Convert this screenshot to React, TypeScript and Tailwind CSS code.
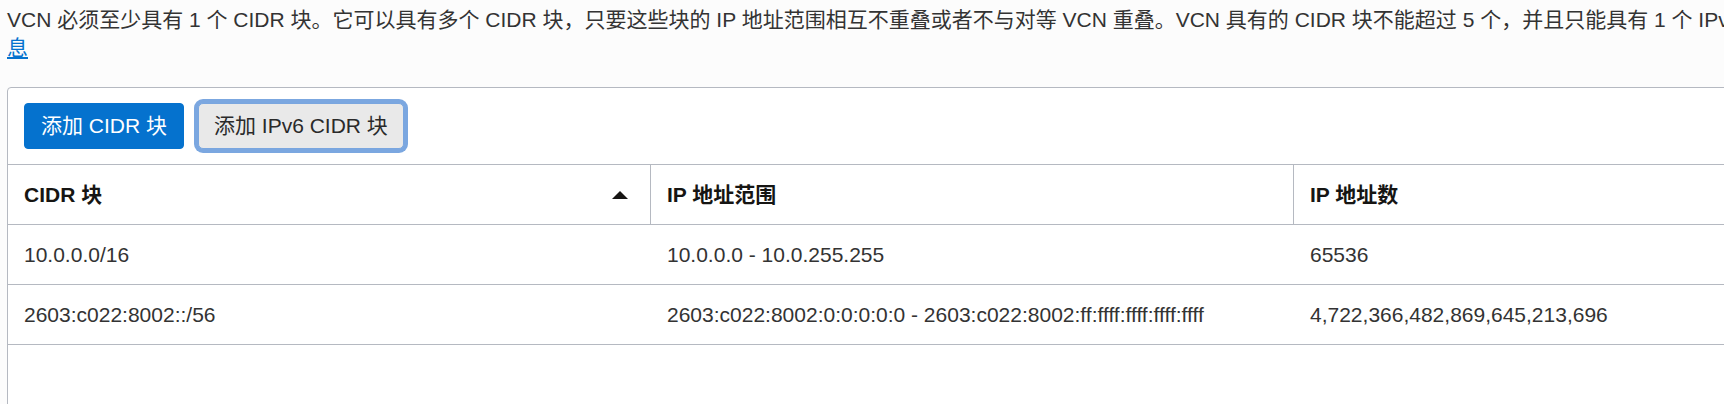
import React from "react";

const font = "font-['Liberation_Sans','Noto_Sans_CJK_SC',sans-serif]";

export default function App() {
  return (
    <div className={`w-[1724px] h-[404px] overflow-hidden bg-[#fcfcfc] ${font}`}>
      <div className="w-[2400px] px-[7px] pt-[6px]">
        <p className="text-[21px] leading-[28px] text-[#333333]">
          <span className="block whitespace-nowrap">
            VCN 必须至少具有 1 个 CIDR 块。它可以具有多个 CIDR 块，只要这些块的 IP 地址范围相互不重叠或者不与对等 VCN 重叠。VCN 具有的 CIDR 块不能超过 5 个，并且只能具有 1 个 IPv6 CIDR 块。
            <a href="#" className="text-[#0572ce] underline">了解更多信</a>
          </span>
          <a href="#" className="text-[#0572ce] underline underline-offset-2">息</a>
        </p>

        <div className="mt-[25px] w-[2300px] h-[400px] bg-white border border-[#b5b9c1] rounded-[4px]">
          <div className="h-[77px] flex items-center gap-[14px] pl-4 border-b border-[#b5b9c1]">
            <button className="h-[46px] px-[16px] rounded-[4px] bg-[#0572ce] border border-[#0572ce] text-white text-[21px] leading-[28px]">
              添加 CIDR 块
            </button>
            <button className="h-[46px] px-[15px] rounded-[5px] bg-[#e9e9e9] border border-[#7aa6df] shadow-[0_0_0_4px_#7ba7e0] text-[#2a2a2a] text-[21px] leading-[28px]">
              添加 IPv6 CIDR 块
            </button>
          </div>

          {/* header */}
          <div className="flex h-[60px] border-b border-[#b5b9c1] text-[21px] font-bold text-[#161513]">
            <div className="w-[642px] flex items-center justify-between pl-4 pr-[22px]">
              <span>CIDR 块</span>
              <svg width="16" height="8" viewBox="0 0 16 8" className="mt-[1px]">
                <polygon points="8,0 16,8 0,8" fill="#161513" />
              </svg>
            </div>
            <div className="w-[643px] flex items-center pl-4 border-l border-[#b5b9c1]">
              IP 地址范围
            </div>
            <div className="w-[643px] flex items-center pl-4 border-l border-[#b5b9c1]">
              IP 地址数
            </div>
          </div>

          {[
            ["10.0.0.0/16", "10.0.0.0 - 10.0.255.255", "65536"],
            [
              "2603:c022:8002::/56",
              "2603:c022:8002:0:0:0:0:0 - 2603:c022:8002:ff:ffff:ffff:ffff:ffff",
              "4,722,366,482,869,645,213,696",
            ],
          ].map((row, i) => (
            <div
              key={i}
              className="flex h-[60px] border-b border-[#b5b9c1] text-[21px] text-[#333333]"
            >
              <div className="w-[642px] flex items-center pl-4">{row[0]}</div>
              <div className="w-[643px] flex items-center pl-[17px]">{row[1]}</div>
              <div className="w-[643px] flex items-center pl-[17px]">{row[2]}</div>
            </div>
          ))}
        </div>
      </div>
    </div>
  );
}
